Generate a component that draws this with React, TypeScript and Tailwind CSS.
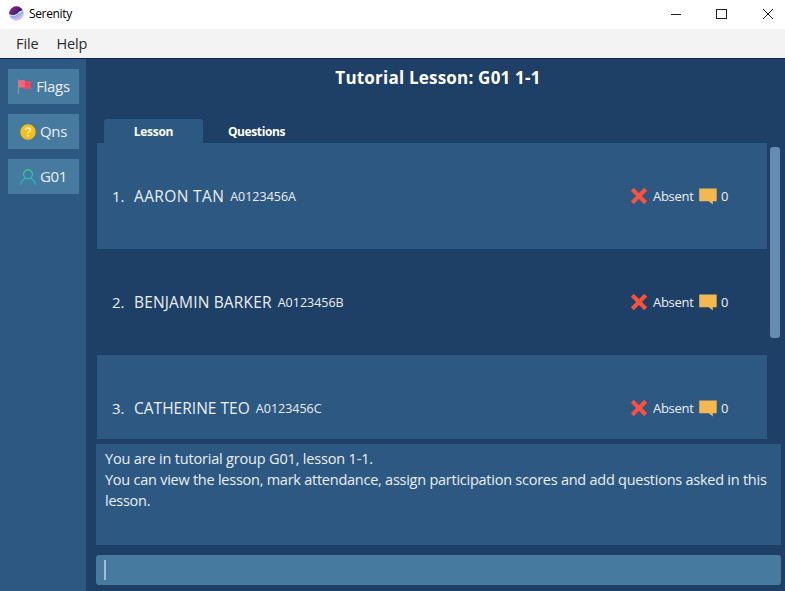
import React from "react";

const students = [
  { n: 1, name: "AARON TAN", id: "A0123456A", box: "h-[106px] bg-[#2d5882]", nameStyle: "tracking-[0.36px]" },
  { n: 2, name: "BENJAMIN BARKER", id: "A0123456B", box: "h-[106px] bg-[#1e3f66]", nameStyle: "tracking-[0.16px]" },
  { n: 3, name: "CATHERINE TEO", id: "A0123456C", box: "h-[106px] bg-[#2d5882]", nameStyle: "tracking-[0.02px]" },
];

function Logo() {
  return (
    <svg className="ml-[9px] h-[15px] w-[15px]" viewBox="0 0 15 15">
      <defs>
        <linearGradient id="logoTop" x1="0" y1="0" x2="1" y2="0.6">
          <stop offset="0" stopColor="#9b2a8c" />
          <stop offset="1" stopColor="#2a1765" />
        </linearGradient>
        <clipPath id="logoClip"><circle cx="7.4" cy="7.5" r="7.2" /></clipPath>
      </defs>
      <g clipPath="url(#logoClip)">
        <rect width="15" height="15" fill="#e3b4e0" />
        <path d="M0 9C4 10.5 8 9.8 15 4V7.8C10.5 8.5 10 12 6.5 12.3C3.5 12.4 1.5 11.5 0 10.5Z" fill="#7cc0f0" />
        <path d="M0 0H15V4.6C11.5 4.4 10.3 5.6 8.6 7.5C6.5 9.6 3 9.8 0 8.5Z" fill="url(#logoTop)" />
        <path d="M0 8.8C4 10 6.8 9.5 8.8 7.6C10.6 5.7 12 4.8 15 4.9" fill="none" stroke="#dceefc" strokeWidth="0.8" />
      </g>
    </svg>
  );
}

function Flag() {
  return (
    <svg className="h-[16px] w-[15px]" viewBox="0 0 15 16">
      <path d="M1.5 0.5V15.5" stroke="#8b98a8" strokeWidth="1" />
      <path d="M2 1.2H8V8.5H2Z" fill="#ff6478" />
      <path d="M8 2.4H14.5L13 6L14.5 9.7H6V8.5H8Z" fill="#fa4558" />
    </svg>
  );
}

function Question() {
  return (
    <svg className="h-[16px] w-[16px]" viewBox="0 0 16 16">
      <circle cx="8" cy="8" r="7.7" fill="#fdbd12" />
      <path d="M5.6 6.2C5.6 4.6 6.6 3.7 8 3.7S10.4 4.6 10.4 6C10.4 7.7 8 7.8 8 9.8" fill="none" stroke="#fff7e0" strokeWidth="1.5" />
      <circle cx="8" cy="12" r="1" fill="#fff7e0" />
    </svg>
  );
}

function Person() {
  return (
    <svg className="h-[16px] w-[16px]" viewBox="0 0 16 16" fill="none" strokeWidth="1.2" strokeLinecap="round">
      <defs>
        <linearGradient id="person" x1="0" y1="0" x2="0" y2="16" gradientUnits="userSpaceOnUse">
          <stop offset="0" stopColor="#2ddc8c" />
          <stop offset="1" stopColor="#18a9de" />
        </linearGradient>
      </defs>
      <circle cx="8" cy="5.2" r="4.4" stroke="url(#person)" />
      <path d="M0.8 15.3C1.2 12.3 3 10.3 5.6 9.4M10.4 9.4C13 10.3 14.8 12.3 15.2 15.3" stroke="url(#person)" />
    </svg>
  );
}

function Cross() {
  return (
    <svg className="h-[18px] w-[18px]" viewBox="0 0 18 18">
      <path d="M2.3 2.3L15.7 15.7M15.7 2.3L2.3 15.7" stroke="#fd513c" strokeWidth="4.1" />
    </svg>
  );
}

function Bubble() {
  return (
    <svg className="h-[17px] w-[18px]" viewBox="0 0 18 17">
      <path d="M0.2 0.5H17.7V13.3H13.8V16.4L9.8 13.3H0.2Z" fill="#f3b84e" />
    </svg>
  );
}

export default function App() {
  return (
    <div className="flex h-[591px] w-[785px] flex-col overflow-hidden bg-[#1e3f66] font-['Open_Sans','Noto_Sans',sans-serif] text-[#e9eff5]">
      <header className="flex h-[29px] shrink-0 items-center bg-white pb-[2px] text-[12px] text-black">
        <Logo />
        <span className="ml-[5px] pt-px tracking-[-0.35px]">Serenity</span>
        <svg className="ml-auto h-[12px] w-[106px]" viewBox="0 0 106 12" fill="none" stroke="#222">
          <path d="M0 6.5H10" />
          <rect x="45.5" y="1.5" width="10" height="9" />
          <path d="M92 1L102 11M102 1L92 11" />
        </svg>
        <span className="w-[8px]" />
      </header>
      <nav className="flex h-[30px] shrink-0 items-center gap-[18px] border-b border-[#102152] bg-[#f3f3f3] pt-px pl-[16px] text-[14.5px] text-[#2c2c2c]">
        <span className="tracking-[-0.1px]">File</span>
        <span className="tracking-[-0.2px]">Help</span>
      </nav>
      <div className="flex min-h-0 flex-1">
        <aside className="flex w-[86px] shrink-0 flex-col gap-[10px] bg-[#2d5882] px-[8px] pt-[10px] text-[15px]">
          <button className="flex h-[35px] w-[71px] items-center justify-center gap-[4px] bg-[#477a9f]"><Flag /><span className="tracking-[-0.3px]">Flags</span></button>
          <button className="flex h-[35px] w-[71px] items-center justify-center gap-[4px] bg-[#477a9f]"><Question /><span className="tracking-[-0.3px]">Qns</span></button>
          <button className="flex h-[35px] w-[71px] items-center justify-center gap-[4px] bg-[#477a9f]"><Person /><span className="tracking-[-0.3px]">G01</span></button>
        </aside>
        <main className="flex min-w-0 flex-1 flex-col pl-[10px]">
          <h1 className="h-[60px] pt-[6px] pr-[5px] text-center text-[17px] leading-[26px] font-bold tracking-[0.21px] text-white">Tutorial Lesson: G01 1-1</h1>
          <div className="flex h-[24px] pl-[8px] text-[12px] font-bold text-white">
            <div className="flex w-[99px] items-center justify-center rounded-t-[3px] bg-[#2d5882] pt-[2px] tracking-[-0.3px]">Lesson</div>
            <div className="flex w-[107px] items-center justify-center pt-[2px] tracking-[-0.4px]">Questions</div>
          </div>
          <section className="flex h-[296px] pl-px">
            <div className="w-[670px] overflow-hidden">
              {students.map((s) => (
                <div key={s.n} className={"flex items-center pl-[15px] " + s.box}>
                  <span className="w-[22px] text-[15px] leading-[20px]">{s.n}.</span>
                  <span className={"pb-px text-[15.5px] leading-[20px] " + s.nameStyle}>{s.name}</span>
                  <span className="ml-[6px] pt-px text-[12.5px] leading-[18px]">{s.id}</span>
                  <div className="ml-auto flex w-[137px] items-center text-[13px]">
                    <Cross />
                    <span className="ml-[5px] w-[46px] pt-px tracking-[-0.3px]">Absent</span>
                    <Bubble />
                    <span className="ml-[4px] pt-px">0</span>
                  </div>
                </div>
              ))}
            </div>
            <div className="mt-[4px] ml-[3px] h-[191px] w-[10px] rounded-[3px] bg-[#668bb1]" />
          </section>
          <section className="mt-[5px] h-[101px] w-[685px] bg-[#2d5882] pt-[4px] pl-[9px] text-[14.5px] leading-[21.2px] whitespace-nowrap">
            <p className="tracking-[-0.18px]">You are in tutorial group G01, lesson 1-1.</p>
            <p className="tracking-[-0.25px]">You can view the lesson, mark attendance, assign participation scores and add questions asked in this</p>
            <p className="tracking-[-0.25px]">lesson.</p>
          </section>
          <div className="mt-[10px] flex h-[30px] w-[685px] items-center rounded-[3px] bg-[#477a9f] pl-[8px]">
            <span className="h-[20px] w-[2px] bg-[#9fbdd4]" />
          </div>
        </main>
      </div>
    </div>
  );
}
